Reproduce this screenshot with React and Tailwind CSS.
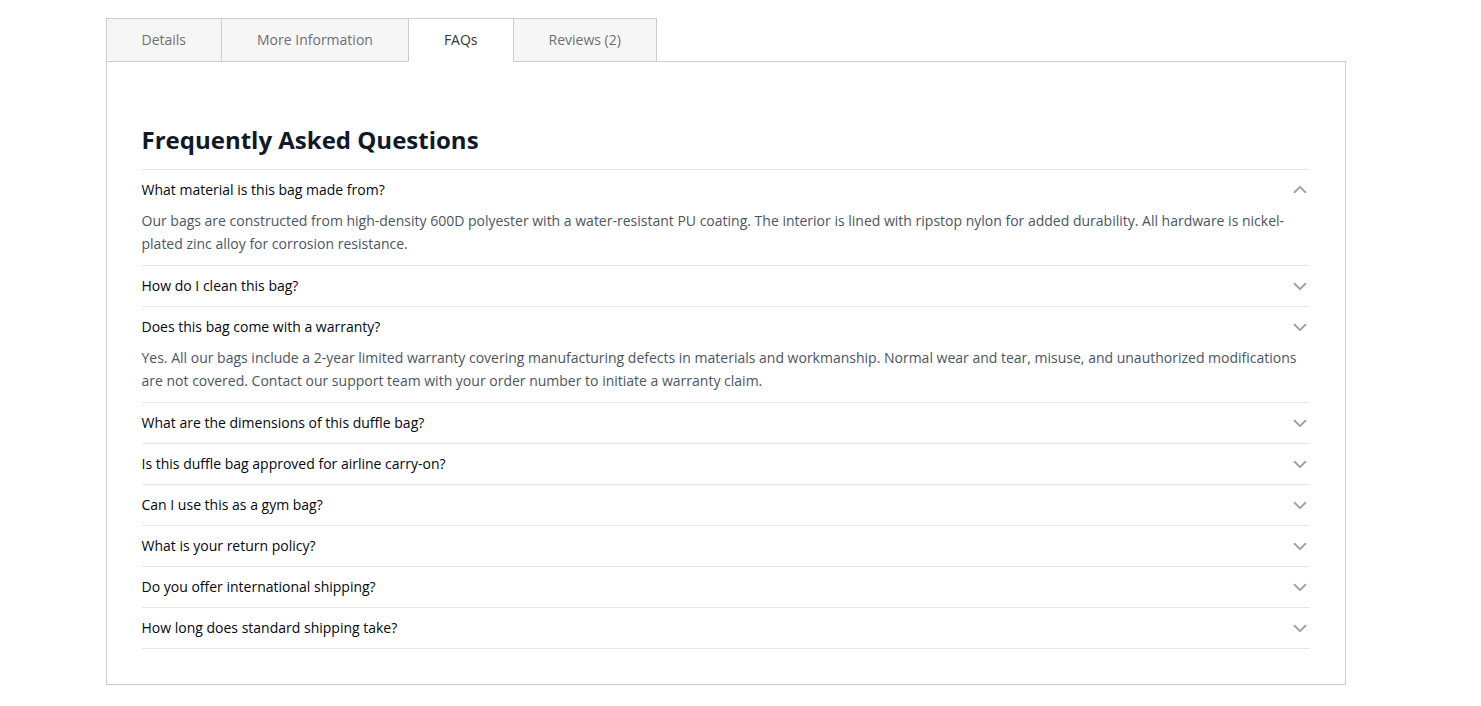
import { useState } from "react";

const tabs = ["Details", "More Information", "FAQs", "Reviews (2)"];

const faqs = [
  {
    id: "material",
    question: "What material is this bag made from?",
    answer:
      "Our bags are constructed from high-density 600D polyester with a water-resistant PU coating. The interior is lined with ripstop nylon for added durability. All hardware is nickel-plated zinc alloy for corrosion resistance.",
    open: true,
    chevronUp: true,
  },
  { id: "clean", question: "How do I clean this bag?" },
  {
    id: "warranty",
    question: "Does this bag come with a warranty?",
    answer:
      "Yes. All our bags include a 2-year limited warranty covering manufacturing defects in materials and workmanship. Normal wear and tear, misuse, and unauthorized modifications are not covered. Contact our support team with your order number to initiate a warranty claim.",
    open: true,
  },
  { id: "dimensions", question: "What are the dimensions of this duffle bag?" },
  { id: "airline", question: "Is this duffle bag approved for airline carry-on?" },
  { id: "gym", question: "Can I use this as a gym bag?" },
  { id: "returns", question: "What is your return policy?" },
  { id: "international", question: "Do you offer international shipping?" },
  { id: "shipping", question: "How long does standard shipping take?" },
];

const Chevron = ({ up }) => (
  <svg
    className={`h-5 w-5 shrink-0 text-[#9ca3af] ${up ? "rotate-180" : ""}`}
    viewBox="0 0 20 20"
    fill="none"
    stroke="currentColor"
    strokeWidth="2"
    strokeLinecap="round"
    strokeLinejoin="round"
    aria-hidden="true"
  >
    <path d="M4.6 7.8L10 13.1L15.4 7.8" />
  </svg>
);

const FaqItem = ({ item }) => {
  const [open, setOpen] = useState(Boolean(item.open));
  const [up, setUp] = useState(Boolean(item.chevronUp));

  const handleToggle = () => {
    setOpen(!open);
    setUp(!open);
  };

  return (
    <div className="border-b border-[#e5e7eb]">
      <button
        type="button"
        aria-expanded={open}
        onClick={handleToggle}
        className="flex h-10 w-full cursor-pointer items-center justify-between text-left text-[#030712]"
      >
        <span>{item.question}</span>
        <Chevron up={up} />
      </button>
      {open && item.answer && (
        <p className="-mt-px pb-[10px] leading-[23px] text-[#4b5563]">{item.answer}</p>
      )}
    </div>
  );
};

const App = () => {
  const [activeTab, setActiveTab] = useState("FAQs");

  return (
    <main className="pt-[18px] pr-[30px] pb-5 font-['Open_Sans',sans-serif] text-sm">
      <div className="mx-auto max-w-[1240px]">
        <div role="tablist" className="flex">
          {tabs.map((tab) => (
            <button
              key={tab}
              type="button"
              role="tab"
              aria-selected={tab === activeTab}
              onClick={() => setActiveTab(tab)}
              className={`-mr-px h-11 cursor-pointer border border-[#cccccc] px-[35px] ${
                tab === activeTab
                  ? "z-10 border-b-white bg-white text-[#333333]"
                  : "bg-[#f6f6f6] text-[#707070]"
              }`}
            >
              {tab}
            </button>
          ))}
        </div>

        <section role="tabpanel" className="-mt-px border border-[#cccccc] px-[35px] pt-[62px] pb-[35px]">
          <h2 className="mb-[13px] text-2xl font-bold text-[#111827]">Frequently Asked Questions</h2>
          <div className="border-t border-[#e5e7eb]">
            {faqs.map((item) => (
              <FaqItem key={item.id} item={item} />
            ))}
          </div>
        </section>
      </div>
    </main>
  );
};

export default App;
